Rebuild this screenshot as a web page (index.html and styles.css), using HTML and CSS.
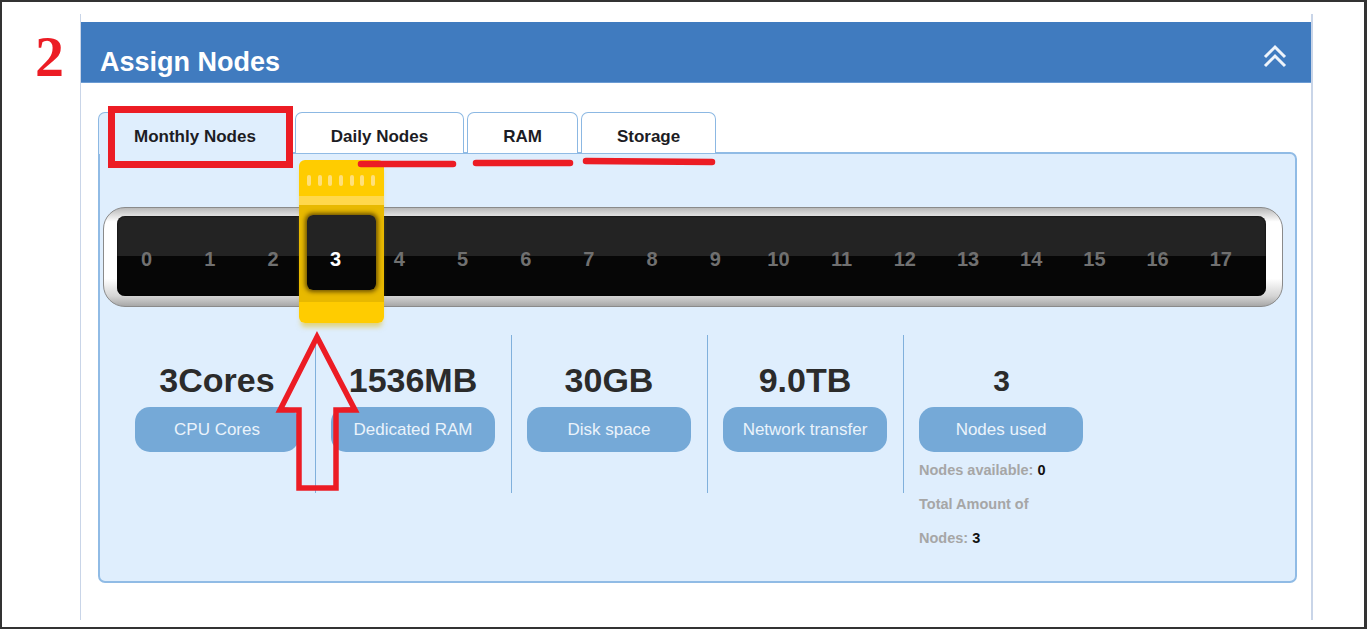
FILE: index.html
```html
<!DOCTYPE html>
<html lang="en">
<head>
    <meta charset="UTF-8">
    <meta name="viewport" content="width=device-width, initial-scale=1.0">
    <title>Assign Nodes</title>
    <link rel="stylesheet" href="styles.css">
</head>
<body>
    <div class="frame">
        <!-- Step number -->
        <div class="step">2</div>

        <div class="box">
            <div class="box-header">
                <h2>Assign Nodes</h2>
                <svg class="collapse" width="24" height="24" viewBox="0 0 24 24">
                    <path d="M2 13 L12 3 L22 13" fill="none" stroke="#eef4fb" stroke-width="3"/>
                    <path d="M2 22 L12 12 L22 22" fill="none" stroke="#eef4fb" stroke-width="3"/>
                </svg>
            </div>

            <div class="box-body">
                <!-- Plan tabs -->
                <div class="tabs">
                    <div class="tab active">Monthly Nodes</div>
                    <div class="tab">Daily Nodes</div>
                    <div class="tab">RAM</div>
                    <div class="tab">Storage</div>
                </div>

                <div class="panel">
                    <!-- Node slider -->
                    <div class="slider">
                        <div class="track">
                            <span>0</span><span>1</span><span>2</span><span>3</span><span>4</span><span>5</span>
                            <span>6</span><span>7</span><span>8</span><span>9</span><span>10</span><span>11</span>
                            <span>12</span><span>13</span><span>14</span><span>15</span><span>16</span><span>17</span>
                        </div>
                        <div class="handle">
                            <div class="grips">
                                <i></i><i></i><i></i><i></i><i></i><i></i><i></i>
                            </div>
                            <div class="window"><span>3</span></div>
                        </div>
                    </div>

                    <!-- Resources for the selected amount -->
                    <div class="stats">
                        <div class="stat">
                            <div class="value">3Cores</div>
                            <div class="pill">CPU Cores</div>
                        </div>
                        <div class="stat">
                            <div class="value">1536MB</div>
                            <div class="pill">Dedicated RAM</div>
                        </div>
                        <div class="stat">
                            <div class="value">30GB</div>
                            <div class="pill">Disk space</div>
                        </div>
                        <div class="stat">
                            <div class="value">9.0TB</div>
                            <div class="pill">Network transfer</div>
                        </div>
                        <div class="stat last">
                            <div class="value small">3</div>
                            <div class="pill">Nodes used</div>
                            <div class="info">
                                <p>Nodes available: <b>0</b></p>
                                <p>Total Amount of Nodes: <b>3</b></p>
                            </div>
                        </div>
                    </div>
                </div>

                <!-- Red annotation marks drawn over the screenshot -->
                <svg class="marks" width="1230" height="537" viewBox="0 0 1230 537">
                    <g transform="translate(-81,-83)" fill="none" stroke="#ec1c24">
                        <rect x="111.5" y="109.5" width="178" height="55" stroke-width="7"/>
                        <path d="M361 164 L453 164" stroke-width="6.5" stroke-linecap="round"/>
                        <path d="M476 163 L570 163" stroke-width="6.5" stroke-linecap="round"/>
                        <path d="M586 161 L712 162" stroke-width="6.5" stroke-linecap="round"/>
                        <polygon points="317,337 355,410 336,410 336,488 299,488 299,410 280,410" stroke-width="5.5" stroke-linejoin="miter"/>
                    </g>
                </svg>
            </div>
        </div>
    </div>
</body>
</html>
```

FILE: styles.css
```css
/* Basic page styling */
body {
    margin: 0;
    font-family: "Liberation Sans", Arial, sans-serif;
    background: #fff;
}

.frame {
    display: flex;
    width: 1367px;
    height: 629px;
    box-sizing: border-box;
    border: 2px solid #333;
    border-right-width: 3px;
}

.step {
    width: 78px;
    box-sizing: border-box;
    padding: 26px 0 0 33px;
    font-family: "Liberation Serif", "Times New Roman", serif;
    font-weight: bold;
    font-size: 58px;
    line-height: 58px;
    color: #ec1c24;
}

.box {
    width: 1233px;
    height: 606px;
    margin-top: 12px;
    box-sizing: border-box;
    border-left: 1px solid #c9d5e8;
    border-right: 2px solid #c9d5e8;
}

.box-header {
    display: flex;
    justify-content: space-between;
    align-items: flex-start;
    height: 61px;
    margin-top: 8px;
    padding: 0 24px 0 19px;
    background-color: #407bbf;
    border-bottom: 1px solid #6b9bd3;
    box-sizing: border-box;
}

.box-header h2 {
    margin: 25px 0 0;
    font-size: 27px;
    line-height: 31px;
    color: #fff;
}

.collapse {
    margin-top: 22px;
}

.box-body {
    position: relative;
    padding: 29px 14px 0 17px;
}

/* Tabs */
.tabs {
    display: flex;
    gap: 3px;
    position: relative;
    z-index: 1;
    margin-bottom: -1px;
}

.tab {
    height: 41px;
    box-sizing: border-box;
    padding: 14px 35px 0;
    font-size: 17px;
    font-weight: bold;
    line-height: 20px;
    color: #1c1c24;
    background-color: #fff;
    border: 1px solid #8cb8e3;
    border-bottom: none;
    border-radius: 7px 7px 0 0;
}

.tab.active {
    height: 42px;
    margin-bottom: -1px;
    background-color: #dfeefd;
}

.panel {
    height: 431px;
    box-sizing: border-box;
    padding-top: 53px;
    background-color: #dfeefd;
    border: 2px solid #90bbe5;
    border-radius: 0 7px 7px 7px;
}

/* Slider */
.slider {
    position: relative;
    width: 1180px;
    height: 100px;
    margin-left: 3px;
    box-sizing: border-box;
    padding: 8px 16px 10px 13px;
    border: 1px solid #8a8a8a;
    border-radius: 22px;
    background: linear-gradient(to bottom, #b9b9b9 0, #fff 14%, #fff 72%, #d4d4d4 90%, #a8a8a8 100%);
}

.track {
    display: flex;
    align-items: center;
    height: 80px;
    box-sizing: border-box;
    padding-top: 6px;
    border-radius: 8px;
    background: linear-gradient(to bottom, #232323 50%, #060606 50%);
    box-shadow: inset 0 0 2px #000;
}

.track span {
    flex: 0 0 63.2px;
    text-align: center;
    font-size: 20px;
    font-weight: bold;
    color: #707070;
}

.track span:first-child {
    margin-left: -2px;
}

.handle {
    position: absolute;
    left: 195px;
    top: -48px;
    width: 85px;
    height: 163px;
    border-radius: 6px;
    background: linear-gradient(to bottom, #ffcc00 0, #ffcc00 36px, #ffd84c 36px, #ffd84c 45px, #e8b900 45px, #e8b900 142px, #ffcc00 142px);
    box-shadow: 0 6px 5px -2px rgba(225, 185, 0, 0.5);
}

.grips {
    display: flex;
    gap: 6.7px;
    margin: 15px 0 0 8px;
}

.grips i {
    width: 4px;
    height: 11px;
    border-radius: 2px;
    background-color: #ffe07a;
}

.window {
    width: 69px;
    height: 75px;
    margin: 29px 0 0 8px;
    box-sizing: border-box;
    padding: 32px 0 0 23px;
    border-radius: 6px;
    background: linear-gradient(to bottom, #232323 41px, #060606 41px);
    box-shadow: 0 0 4px 2px rgba(60, 40, 0, 0.7);
}

.window span {
    font-size: 20px;
    font-weight: bold;
    line-height: 24px;
    color: #fff;
}

/* Stats row */
.stats {
    display: flex;
    align-items: flex-start;
    margin: 28px 0 0 20px;
}

.stat {
    width: 196px;
    height: 158px;
    box-sizing: border-box;
    padding: 26px 16px 0 15px;
    border-right: 1px solid #80b0dc;
}

.stat.last {
    border-right: none;
}

.value {
    font-size: 34px;
    font-weight: bold;
    line-height: 39px;
    text-align: center;
    color: #2b2b2b;
}

.value.small {
    font-size: 30px;
}

.pill {
    width: 164px;
    height: 45px;
    margin-top: 7px;
    border-radius: 15px;
    background-color: #75a9d7;
    color: #eaf3fb;
    font-size: 17px;
    line-height: 46px;
    text-align: center;
}

.info {
    width: 150px;
    margin-top: 1px;
    font-size: 14.5px;
    font-weight: bold;
    line-height: 34px;
    color: #a6a6a6;
}

.info p {
    margin: 0;
}

.info b {
    color: #111;
}

.marks {
    position: absolute;
    left: 0;
    top: 0;
    z-index: 2;
    pointer-events: none;
}
```
